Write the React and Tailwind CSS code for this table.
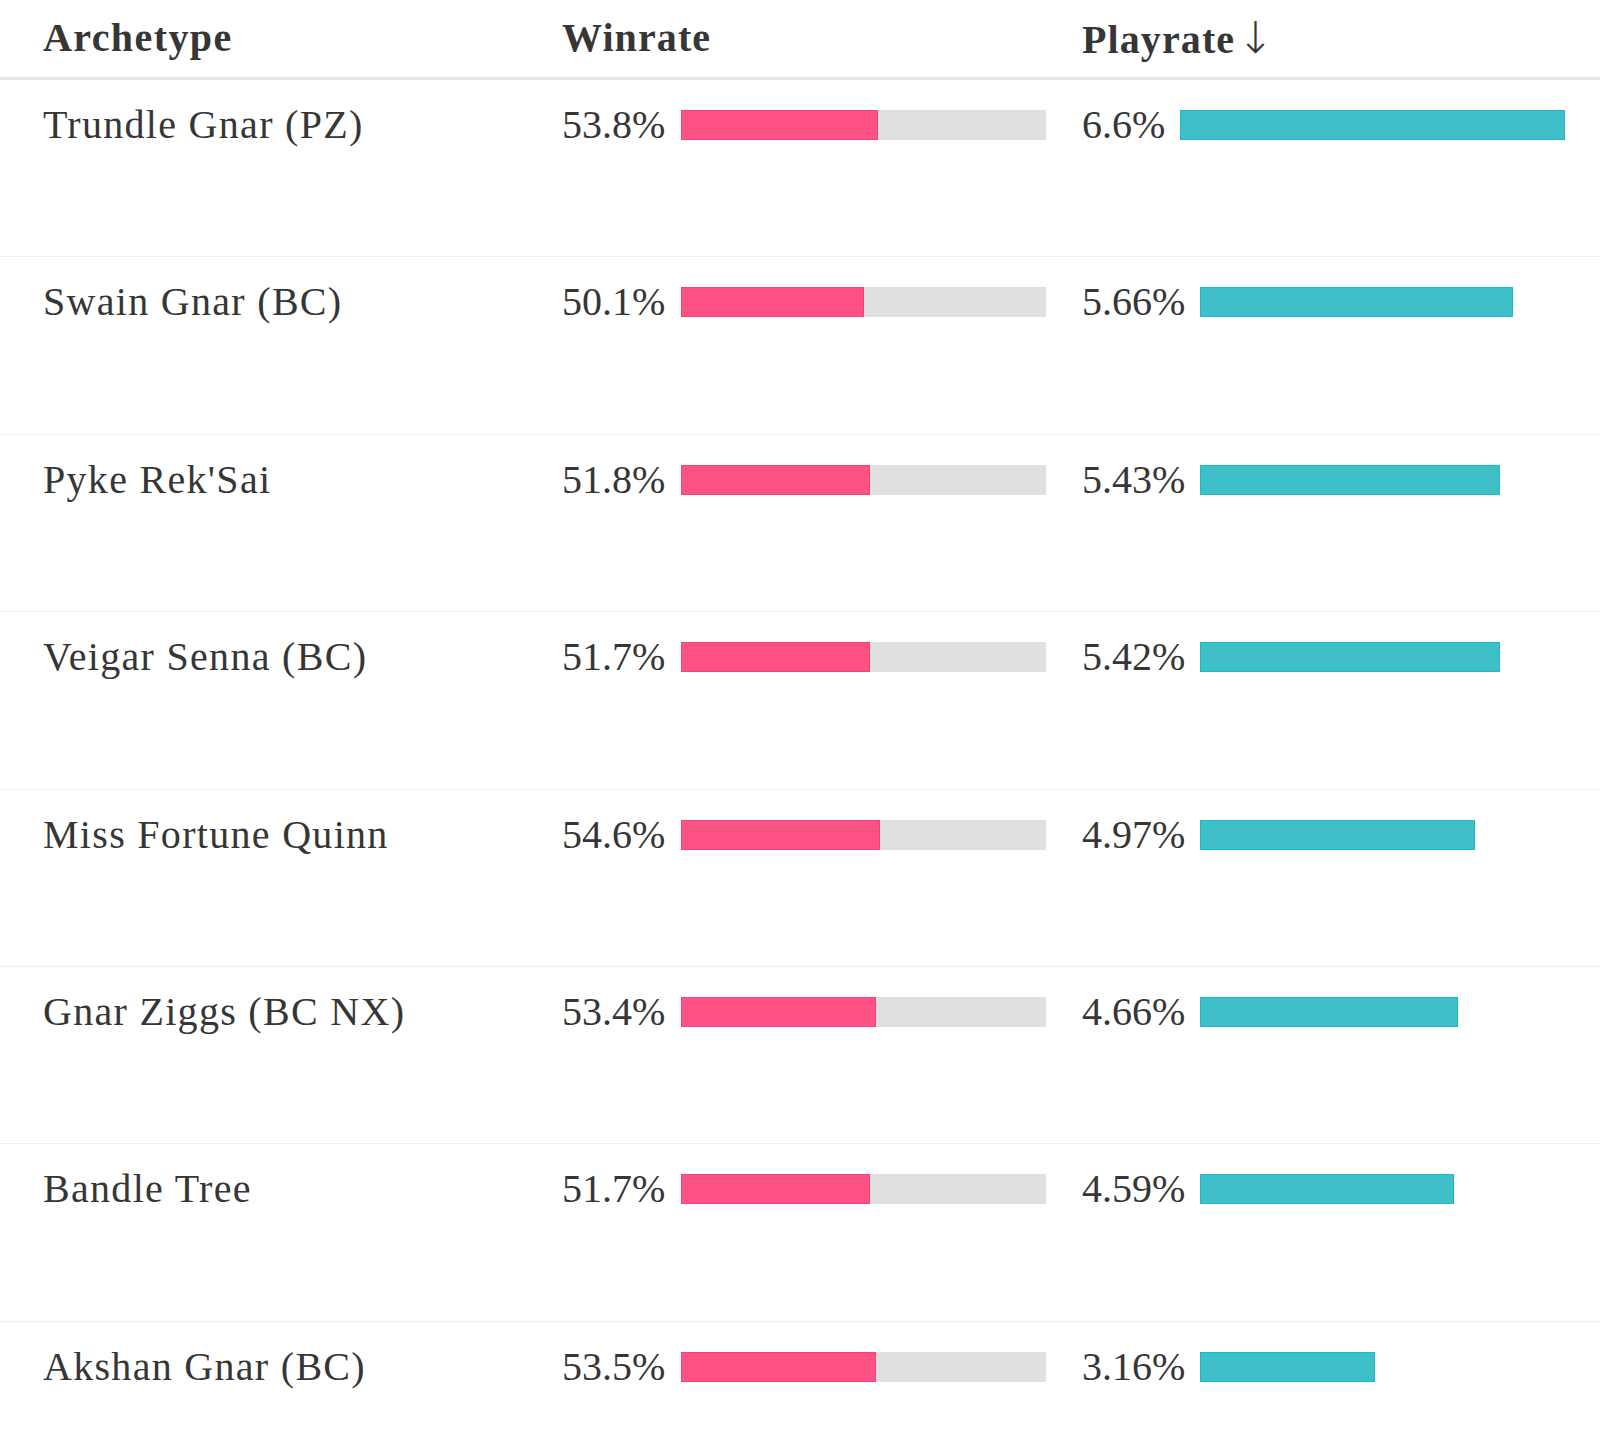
import React from "react";

const rows = [
  { name: "Trundle Gnar (PZ)", win: 53.8, play: 6.6, playLabel: "6.6%" },
  { name: "Swain Gnar (BC)", win: 50.1, play: 5.66, playLabel: "5.66%" },
  { name: "Pyke Rek'Sai", win: 51.8, play: 5.43, playLabel: "5.43%" },
  { name: "Veigar Senna (BC)", win: 51.7, play: 5.42, playLabel: "5.42%" },
  { name: "Miss Fortune Quinn", win: 54.6, play: 4.97, playLabel: "4.97%" },
  { name: "Gnar Ziggs (BC NX)", win: 53.4, play: 4.66, playLabel: "4.66%" },
  { name: "Bandle Tree", win: 51.7, play: 4.59, playLabel: "4.59%" },
  { name: "Akshan Gnar (BC)", win: 53.5, play: 3.16, playLabel: "3.16%" },
];

const maxPlay = 6.6;

export default function App() {
  return (
    <div
      className="w-[1600px] bg-white text-[#363636]"
      style={{ fontFamily: '"Liberation Serif", "DejaVu Serif", serif' }}
    >
      <div className="grid grid-cols-[562px_520px_518px] h-[80px] border-b-[3px] border-[#e5e5e5]">
        <div className="pl-[43px] pt-[23px] text-[40px] leading-[30px] font-bold tracking-[1.4px]">
          Archetype
        </div>
        <div className="pt-[23px] text-[40px] leading-[30px] font-bold tracking-[1.1px]">
          Winrate
        </div>
        <div className="pt-[23px] text-[40px] leading-[30px] font-bold tracking-[1.1px] whitespace-nowrap">
          Playrate
          <span
            className="ml-[2px] font-extralight text-[44px] tracking-normal"
            style={{ fontFamily: '"DejaVu Sans", sans-serif' }}
          >
            ↓
          </span>
        </div>
      </div>
      {rows.map((r) => (
        <div
          key={r.name}
          className="grid grid-cols-[562px_520px_518px] h-[177.4px] border-b border-[#efefef]"
        >
          <div className="pl-[43px] pt-[30px]">
            <div className="text-[40px] leading-[30px] tracking-[1.3px] whitespace-nowrap">
              {r.name}
            </div>
          </div>
          <div className="pr-[36px] pt-[30px]">
            <div className="flex items-center gap-[16px]">
              <span className="text-[40px] leading-[30px] whitespace-nowrap">{r.win}%</span>
              <div className="flex-1 h-[30px] bg-[#e0e0e0]">
                <div
                  className="h-full bg-[#fe5285] border border-[#f5427b]"
                  style={{ width: `${r.win}%` }}
                />
              </div>
            </div>
          </div>
          <div className="pr-[35px] pt-[30px]">
            <div className="flex items-center gap-[15px]">
              <span className="text-[40px] leading-[30px] whitespace-nowrap">{r.playLabel}</span>
              <div className="flex-1 h-[30px]">
                <div
                  className="h-full bg-[#3fc0c8] border border-[#17bac5]"
                  style={{ width: `${(r.play / maxPlay) * 100}%` }}
                />
              </div>
            </div>
          </div>
        </div>
      ))}
    </div>
  );
}
